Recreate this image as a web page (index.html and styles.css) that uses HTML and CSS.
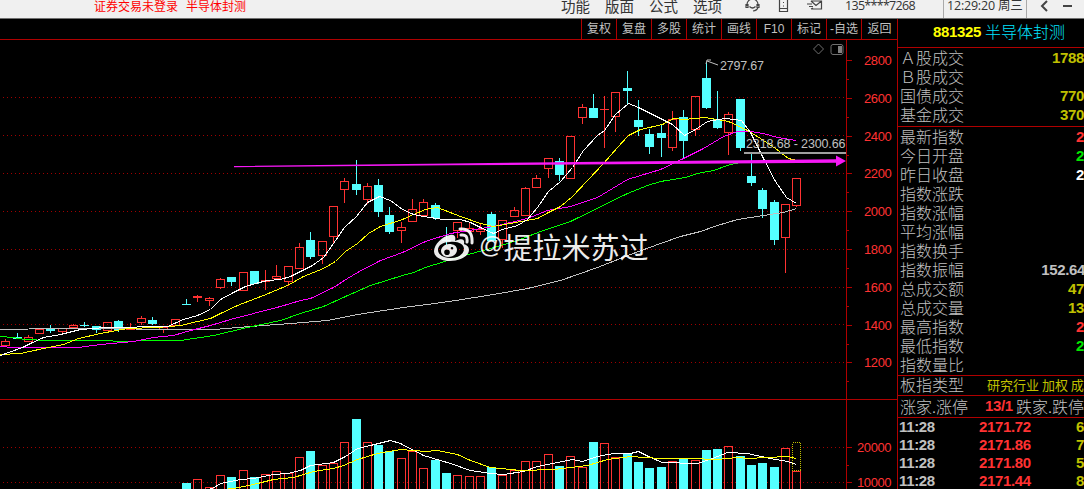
FILE: index.html
```html
<!DOCTYPE html>
<html lang="zh-CN">
<head>
  <meta charset="utf-8" />
  <meta name="viewport" content="width=device-width, initial-scale=1.0" />
  <title>半导体封测 881325</title>
  <link rel="stylesheet" href="styles.css">
</head>
<body>
  <header class="topbar">
    <div class="status"><span>证券交易未登录</span><span>半导体封测</span></div>
    <nav class="menu"><span>功能</span><span>版面</span><span>公式</span><span>选项</span></nav>
    <div class="tools">
      <svg width="16" height="14" viewBox="0 0 16 14"><path d="M2 7V5.500a5.500 5.500 0 0 1 11 0V7M1 5.500h2v3H1zM12 5.500h2v3h-2zM4.500 7.500q3 3 6 0M13 8.500q-1 3-5 3.500" /></svg>
      <svg width="12" height="14" viewBox="0 0 12 14"><path d="M1.500 0v12.500h8V0M1.500 9.500h8M5 3.500h1M5 7h1" /></svg>
      <svg width="16" height="14" viewBox="0 0 16 14"><path d="M4 2h10.500v8H5M4 2l5 4.500L14.500 2M0 5h5M2 7.500h4M4 10l2-1" /></svg>
    </div>
    <span class="phone">135****7268</span>
    <span class="clock">12:29:20 周三</span>
    <div class="window">
      <svg width="10" height="12" viewBox="0 0 10 12"><path d="M7 1L2 6l5 5" /></svg>
      <svg width="10" height="12" viewBox="0 0 10 12"><path d="M0 6h9" /></svg>
    </div>
  </header>

  <main>
    <section class="left">
      <nav class="tabs">
        <span>复权</span><span>复盘</span><span>多股</span><span>统计</span><span>画线</span><span>F10</span><span>标记</span><span>-自选</span><span>返回</span>
      </nav>
      <div class="chart-wrap">
        <svg id="chart" width="897" height="449" viewBox="0 40 897 449"></svg>
        <div class="watermark">
          <svg width="42" height="36" viewBox="0 0 42 36">
            <path class="face" fill-rule="evenodd" d="M17 8C9 9 1 18 1 24c0 6 7 10 16 10 10 0 19-5 19-11 0-4-3-5-5-6 1-5-2-6-9-3 1-4 0-7-5-6zM17 15c8-1 14 2 14 7s-6 9-13 9-13-3-13-8 5-8 12-8z" />
            <path class="face" fill-rule="evenodd" d="M16 17c-5 0-8 4-8 7s3 6 7 6c5 0 9-3 9-7s-3-6-8-6zM14 22.500a2.800 2.800 0 1 1 0 5.600 2.800 2.800 0 0 1 0-5.600zM19 20a1.300 1.300 0 1 1 0 2.600 1.300 1.300 0 0 1 0-2.600z" />
            <path class="wave" d="M28 8q7-1 6 7M27 2q13-1 12 14" />
          </svg>
          <span>@</span><span>提拉米苏过</span>
        </div>
      </div>
    </section>

    <aside class="quote">
      <h1><b>881325</b><span>半导体封测</span></h1>
      <ul class="rows turnover">
        <li>Ａ股成交<b class="yellow">1788</b></li>
        <li>Ｂ股成交</li>
        <li>国债成交<b class="yellow">770</b></li>
        <li>基金成交<b class="yellow">370</b></li>
      </ul>
      <ul class="rows stats">
        <li>最新指数<b class="red">2</b></li>
        <li>今日开盘<b class="green">2</b></li>
        <li>昨日收盘<b class="white">2</b></li>
        <li>指数涨跌</li>
        <li>指数涨幅</li>
        <li>平均涨幅</li>
        <li>指数换手</li>
        <li>指数振幅<b class="cut">152.64</b></li>
        <li>总成交额<b class="yellow">47</b></li>
        <li>总成交量<b class="yellow">13</b></li>
        <li>最高指数<b class="red">2</b></li>
        <li>最低指数<b class="green">2</b></li>
        <li>指数量比</li>
      </ul>
      <div class="kind">板指类型<span>研究行业 加权 成</span></div>
      <div class="breadth"><span>涨家</span><i>.</i><span>涨停</span><b class="red">13/1</b><span>跌家</span><i>.</i><span>跌停</span></div>
      <ul class="ticks">
        <li><b>11:28</b><b class="red">2171.72</b><b class="yellow">6</b></li>
        <li><b>11:28</b><b class="red">2171.86</b><b class="yellow">7</b></li>
        <li><b>11:28</b><b class="red">2171.80</b><b class="yellow">5</b></li>
        <li><b>11:28</b><b class="red">2171.44</b><b class="yellow">8</b></li>
      </ul>
    </aside>
  </main>
  <script src="chart.js"></script>
</body>
</html>
```
FILE: styles.css
```css
* {
  box-sizing: border-box;
}
body {
  margin: 0;
  width: 1084px;
  height: 489px;
  overflow: hidden;
  background: #000;
  color: #c0c0c0;
  font-family: "Liberation Sans", "Noto Sans CJK SC", sans-serif;
}
ul {
  list-style: none;
  margin: 0;
  padding: 0;
}
.topbar {
  display: flex;
  align-items: center;
  height: 19px;
  padding-bottom: 7px;
  background: #f0f0f0;
  border-bottom: 1px solid #707070;
  color: #333;
  white-space: nowrap;
}
.topbar svg {
  fill: none;
  stroke: #444;
  stroke-width: 1.2;
}
.status {
  display: flex;
  gap: 8px;
  width: 561px;
  padding-left: 94px;
  font: 12px/12px "Noto Sans CJK SC", sans-serif;
  color: #f00;
}
.menu {
  display: flex;
  gap: 15px;
  width: 184px;
  font: 14.5px/14px "Noto Sans CJK SC", sans-serif;
}
.tools {
  display: flex;
  align-items: center;
  gap: 17px;
  width: 100px;
}
.phone {
  width: 98px;
  font: 12.5px/14px "Open Sans", sans-serif;
  letter-spacing: -0.7px;
}
.clock {
  display: flex;
  align-items: center;
  width: 84px;
  height: 18px;
  margin-bottom: -6px;
  padding: 0 0 6px 3px;
  border-left: 1px solid #aaa;
  border-right: 1px solid #aaa;
  font: 12.5px/14px "Open Sans", "Noto Sans CJK SC", sans-serif;
  letter-spacing: -0.2px;
}
.window {
  display: flex;
  gap: 13px;
  padding-left: 13px;
}
.window svg {
  stroke-width: 2;
}
main {
  display: flex;
  height: 470px;
}
.left {
  width: 897px;
}
.tabs {
  display: flex;
  justify-content: flex-end;
  height: 21px;
  border-bottom: 1px solid #b00000;
  font: 12px/21px "Liberation Sans", "Noto Sans CJK SC", sans-serif;
}
.tabs span {
  width: 35px;
  border-left: 1px solid #b00000;
  text-align: center;
  white-space: nowrap;
}
.tabs span:last-child {
  width: 36px;
}
.chart-wrap {
  position: relative;
  height: 449px;
}
#chart {
  display: block;
}
.grid {
  stroke: #a00000;
  stroke-dasharray: 1 3;
}
.axis {
  stroke: #b00000;
  fill: none;
}
.up {
  stroke: #ff3232;
  fill: none;
}
.down {
  stroke: none;
  fill: #54ffff;
}
.down-wick {
  stroke: #54ffff;
}
.ma {
  fill: none;
  stroke-width: 1;
}
.pending {
  fill: #000;
  stroke: #c0c000;
  stroke-dasharray: 1 1;
}
.scale {
  fill: #ff3232;
  font-size: 13px;
  letter-spacing: -0.4px;
}
.note {
  fill: #c0c0c0;
  font-size: 12.5px;
}
.marker {
  fill: none;
  stroke: #707070;
}
.pointer {
  fill: none;
  stroke: #c0c0c0;
}
.watermark {
  position: absolute;
  left: 433px;
  top: 185px;
  display: flex;
  color: #fff;
  font: 29px/42px "Noto Sans CJK SC", sans-serif;
  opacity: 0.92;
}
.watermark svg {
  margin: 2px 4px 0 0;
}
.watermark span:first-of-type {
  font: 24px/40px "Liberation Sans", sans-serif;
}
.face {
  fill: #fff;
}
.wave {
  fill: none;
  stroke: #fff;
  stroke-width: 3;
  stroke-linecap: round;
}
.quote {
  width: 187px;
  border-left: 1px solid #b00000;
  overflow: hidden;
}
.quote b {
  font: bold 15px/17px "Liberation Sans", sans-serif;
  letter-spacing: -0.34px;
}
.quote h1 {
  display: flex;
  height: 29px;
  margin: 0;
  padding-left: 35px;
  border-bottom: 1px solid #b00000;
  font: 300 16px/25px "Noto Sans CJK SC", sans-serif;
  color: #00e5ff;
}
.quote h1 b {
  width: 52px;
  line-height: 26px;
  color: #ff0;
}
.rows {
  border-bottom: 1px solid #b00000;
}
.rows li {
  display: flex;
  justify-content: space-between;
  height: 19px;
  padding-left: 2px;
  font: 300 16px/17px "Noto Sans CJK SC", sans-serif;
}
.turnover {
  height: 79px;
  padding-top: 1px;
}
.stats {
  height: 249px;
  padding-top: 1px;
}
.cut {
  margin-right: -1px;
}
.red {
  color: #ff3232;
}
.green {
  color: #00e600;
}
.white {
  color: #fff;
}
.yellow {
  color: #c0c000;
}
.kind, .breadth {
  display: flex;
  padding-left: 2px;
  border-bottom: 1px solid #b00000;
  font: 300 16px/17px "Noto Sans CJK SC", sans-serif;
  white-space: nowrap;
}
.kind {
  height: 20px;
}
.kind span {
  margin-left: 23px;
  font-size: 13px;
  font-weight: 400;
  color: #c0c000;
}
.breadth {
  height: 22px;
  line-height: 20px;
}
.breadth i {
  width: 4px;
  font-style: normal;
}
.breadth b {
  width: 32px;
  margin-left: 17px;
  line-height: 20px;
}
.ticks li {
  display: flex;
  height: 18px;
  padding-left: 1px;
}
.ticks b {
  line-height: 18px;
}
.ticks b:first-child {
  width: 80px;
}
.ticks b:last-child {
  margin-left: auto;
}
```
FILE: chart.js
```js
const chart = document.getElementById("chart");

// kind, high, top, bottom, low, volume top
const bars = [
  ["u",339,341,346,346],["d",333,337,339,339],["u",335,337,342,342],["u",329,329,334,334],["d",325,328,331,333],
  ["u",328,328,332,333],["u",324,325,328,328],["d",322,325,326,327],["d",326,326,330,333],["u",322,322,331,331],
  ["d",320,321,330,332],["u",323,328,330,330],["u",316,318,323,325],["d",317,320,324,325],["u",327,327,330,333],
  ["u",319,319,326,326],["d",299,304,305,305,483],["u",295,296,298,302,479],["u",297,298,301,306,487],["u",278,279,288,289,475],
  ["d",277,277,282,286,477],["u",272,272,291,291,470],["d",271,271,284,284,477],["u",270,280,282,290,474],["u",265,276,279,279,471],
  ["u",266,266,282,286,473],["u",243,247,269,269,457],["d",232,240,257,259,451],["u",241,241,256,264,465],["u",206,206,237,243,463],
  ["u",178,181,190,203,442],["d",160,184,190,195,419],["u",183,186,200,204,442],["d",179,185,212,217,445],["d",207,215,232,234,451],
  ["u",222,227,231,243,458],["u",199,209,222,222,451],["u",199,202,216,216,468],["d",203,205,218,220,460],["d",227,240,241,245,473],
  ["u",222,222,231,238,475],["u",222,228,232,232,476],["u",224,229,232,235,476],["d",212,214,241,241,467],["u",220,220,240,248,475],
  ["u",207,210,217,217,470],["u",187,188,216,216,461],["u",175,178,188,188,461],["u",158,158,169,178,454],["d",158,161,175,181,466],
  ["u",136,136,179,179,456],["u",104,107,118,124,467],["d",94,108,118,118,442],["u",96,109,110,148,443],["u",92,92,117,132,457],
  ["d",71,88,91,104,454],["d",100,120,127,136,462],["d",129,134,147,154,468],["d",124,133,138,157,467],["u",111,119,148,151,461],
  ["d",110,117,141,158,459],["u",96,96,130,136,460],["d",62,78,108,109,450],["d",91,119,128,129,449],["u",112,114,133,155,446],
  ["d",99,99,148,151,456],["d",154,176,183,186,465],["d",188,190,209,218,463],["d",200,202,240,245,467],["u",204,204,238,273,448],
  ["u",178,178,206,207,471]
];

const lines = {
  "#c0c0c0": "0,329 57,328 123,328 147,329 213,329 250,326 290,323 327,320 357,314 403,307 427,304 455,300 493,294 527,288 560,280 597,267 630,254 660,243 680,236 700,231 717,225 737,219 763,215 783,212 796,208",
  "#00ff00": "0,336 12,337 25,339 48,340 110,340 115,341 133,341 138,340 180,340 213,335 230,331 247,327 280,320 300,313 323,306 345,296 370,285 402,275 413,272 425,267 460,256 490,248 517,240 540,231 570,221 627,193 647,185 660,181 685,177 697,173 713,170 730,164 745,161 796,160",
  "#ff00ff": "0,346 12,347 78,347 100,344 133,341 153,337 173,335 190,330 210,325 230,319 253,313 280,306 300,300 310,298 333,287 347,278 357,272 380,260 402,252 425,241 450,233 493,226 527,218 547,210 570,206 597,197 627,179 640,175 660,169 683,158 703,148 723,136 737,131 750,131 763,133 777,137 796,140",
  "#ffff00": "0,354 20,353 43,348 63,344 78,338 100,333 127,328 157,327 180,325 197,321 210,318 220,313 237,305 263,295 287,285 303,276 323,268 335,261 345,251 357,243 368,233 380,226 402,219 413,214 425,209 437,207 460,216 480,223 493,226 537,218 548,212 560,206 572,196 587,180 603,163 617,147 628,135 640,129 662,124 673,118 683,119 705,117 728,121 747,130 760,138 775,148 788,158 796,160",
  "#ffffff": "0,355 11,351 22,347 30,343 43,337 60,334 80,329 105,327 127,327 147,326 167,326 183,319 197,315 210,309 220,299 233,292 245,286 255,283 267,280 280,279 290,276 300,271 312,265 323,257 333,243 344,227 356,216 367,202 379,196 390,200 402,209 413,214 423,216 443,219 460,219 470,222 482,228 493,233 502,229 517,225 527,219 537,207 548,191 560,181 572,167 583,150 597,135 604,130 615,114 628,103 638,107 672,124 684,135 695,129 707,121 725,118 741,120 750,132 763,158 775,181 786,197 796,203"
};
const volumeLines = {
  "#ffffff": "207,489 212,488 220,483 240,479 253,478 273,474 287,473 300,470 310,465 333,462 345,456 357,448 370,445 390,440 400,443 423,455 450,463 470,470 490,473 503,474 523,471 537,466 572,459 582,461 597,456 613,453 630,453 638,451 650,457 662,462 697,463 712,458 727,452 747,453 770,458 787,461 796,464",
  "#ffff00": "227,488 233,488 253,484 273,479 293,477 313,471 333,468 343,465 357,459 377,453 400,449 413,450 425,451 437,450 457,454 470,460 490,467 520,470 553,469 587,465 607,459 630,456 660,458 690,458 717,459 737,457 747,458 787,456 796,458"
};

let out = '<g shape-rendering="crispEdges">';
const path = (cls, d) => { out += `<path class="${cls}" d="${d}" />`; };

// grid and axis
[98, 136, 174, 212, 250, 288, 325, 363, 448, 483].forEach(y => path("grid", `M3 ${y - 0.5}H846`));
path("axis", "M846.5 40V489M0 399.5H897");
for (let i = 0; i < 18; i++) {
  const y = Math.round(60 + i * 18.9) + 0.5;
  path("axis", `M847 ${y}h${i % 2 ? 2 : 5}`);
}
path("axis", "M847 447.5h5M847 465.500h2M847 482.500h5");

function box(kind, x, top, bottom) {
  if (kind === "d") {
    out += `<rect class="down" x="${x - 4}" y="${top}" width="9" height="${bottom - top}" />`;
  } else {
    out += `<rect class="up" x="${x - 3.5}" y="${top + 0.5}" width="8" height="${Math.max(bottom - top - 1, 0.01)}" />`;
  }
}

bars.forEach(([kind, high, top, bottom, low, volume], i) => {
  const x = Math.round(5.25 + i * 11.3);
  const wick = kind === "d" ? "down-wick" : "up";
  if (high < top) path(wick, `M${x + 0.5} ${high}V${top}`);
  if (low > bottom) path(wick, `M${x + 0.5} ${bottom}V${low}`);
  box(kind, x, top, bottom);
  if (volume) box(kind, x, volume, 492);
});
out += '<rect class="pending" x="792.5" y="442.5" width="8" height="28" />';

for (const set of [lines, volumeLines]) {
  for (const color in set) {
    out += `<polyline class="ma" stroke="${color}" points="${set[color]}" transform="translate(0.5 0.5)" />`;
  }
}
out += "</g>";

// price labels
for (let i = 0; i < 9; i++) {
  out += `<text class="scale" x="864" y="${Math.round(65 + i * 37.8)}">${2800 - i * 200}</text>`;
}
out += '<text class="scale" x="857" y="452">20000</text><text class="scale" x="857" y="487">10000</text>';
out += '<text class="note" x="720" y="70" textLength="44">2797.67</text>';
out += '<path class="pointer" d="M711 60h-4l-1 4M707 61l11 4" />';

// gap and trend line
out += '<rect x="744" y="152" width="102" height="2" fill="#a0a0a0" />';
out += '<text class="note" x="746" y="148" textLength="99.5">2318.68 - 2300.66</text>';
out += '<path fill="#f618f6" d="M234 166L450 163.500L836 159.300V155.500L846 161L836 166.500V162.800L450 165.300L234 167.300Z" />';

out += '<path class="marker" d="M818.5 44l5 5-5 5-5-5zM833 44.500h8q2 0 2 2v6q0 2-2 2h-8q-2 0-2-2v-6q0-2 2-2z" />';
out += '<rect x="838" y="46" width="4" height="7" fill="#808080" />';
chart.innerHTML = out;
```
